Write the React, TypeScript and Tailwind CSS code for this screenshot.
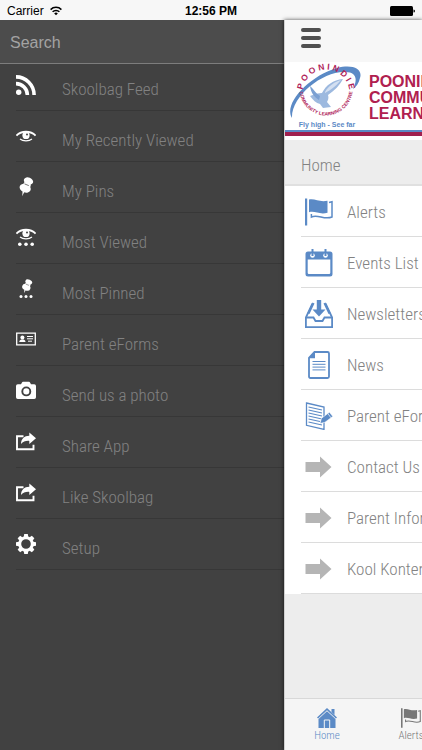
import { useState, type ReactNode } from "react";

interface MenuItem {
  label: string;
  icon: ReactNode;
}

function RssIcon() {
  return (
    <svg viewBox="0 0 20 20" className="h-5 w-5" fill="none" stroke="currentColor" strokeWidth="3.6">
      <circle cx="2.7" cy="17.2" r="2.7" fill="currentColor" stroke="none" />
      <path d="M0 8.6A11.4 11.4 0 0 1 11.4 20" />
      <path d="M0 1.9A18.1 18.1 0 0 1 18.1 20" />
    </svg>
  );
}

function EyeShape() {
  return (
    <>
      <path d="M.4 5.7C5 .4 15 .4 19.6 5.7" fill="none" stroke="currentColor" strokeWidth="1.8" />
      <path d="M4 9C7 11.4 13 11.4 16 9" fill="none" stroke="currentColor" strokeWidth="1.2" />
      <circle cx="10" cy="5.4" r="3.6" fill="currentColor" />
      <circle cx="11" cy="4.6" r="1" fill="#414141" />
    </>
  );
}

function PinShape() {
  return (
    <>
      <ellipse cx="12.5" cy="4" rx="4.8" ry="3.4" transform="rotate(22 12.5 4)" />
      <path d="M8.5 5 15 7.5 14 11 6.5 8.5Z" />
      <ellipse cx="9.2" cy="11.2" rx="5.8" ry="4.2" transform="rotate(22 9.2 11.2)" />
      <path d="M6.6 14 8.6 14.5 6.2 19.2Z" />
      <path d="M8.5 6.9 12.8 8.6" stroke="#414141" strokeWidth=".7" />
    </>
  );
}

function EyeIcon() {
  return (
    <svg viewBox="0 -4 20 20" className="h-5 w-5" fill="currentColor">
      <EyeShape />
    </svg>
  );
}

function MostViewedIcon() {
  return (
    <svg viewBox="0 0 20 20" className="h-5 w-5" fill="currentColor">
      <EyeShape />
      <circle cx="3.8" cy="16.3" r="1.8" />
      <circle cx="10" cy="16.3" r="1.8" />
      <circle cx="16.2" cy="16.3" r="1.8" />
    </svg>
  );
}

function PinIcon() {
  return (
    <svg viewBox="0 0 20 20" className="h-5 w-5" fill="currentColor">
      <PinShape />
    </svg>
  );
}

function MostPinnedIcon() {
  return (
    <svg viewBox="0 0 20 20" className="h-5 w-5" fill="currentColor">
      <g transform="translate(3.5 0) scale(.74)">
        <PinShape />
      </g>
      <circle cx="5" cy="17.5" r="1.5" />
      <circle cx="10" cy="17.5" r="1.5" />
      <circle cx="15" cy="17.5" r="1.5" />
    </svg>
  );
}

function CardIcon() {
  return (
    <svg viewBox="0 0 20 20" className="h-5 w-5" fill="currentColor">
      <path d="M.7 3.2h18.6v11.6H.7z" fill="none" stroke="currentColor" strokeWidth="1.3" />
      <circle cx="6.4" cy="7.5" r="2" />
      <path d="M3.2 12c.3-2 1.6-2.5 3.2-2.5s2.9.5 3.2 2.5z" />
      <path d="M11 6.500h6M11 8.800h6M12 11.200h4" stroke="currentColor" strokeWidth="1" />
    </svg>
  );
}

function CameraIcon() {
  return (
    <svg viewBox="0 0 20 20" className="h-5 w-5" fill="currentColor">
      <path d="M1.8 3.200H5L6 1.400Q6.300.8 7 .8h6q.7 0 1 .6l1 1.800h3.200q1.800 0 1.800 1.800v11.200q0 1.800-1.800 1.800H1.800Q0 18 0 16.200V5q0-1.800 1.800-1.800z" />
      <circle cx="10.3" cy="10.4" r="4" fill="none" stroke="#414141" strokeWidth="1.9" />
    </svg>
  );
}

function ShareIcon() {
  return (
    <svg viewBox="0 0 20 20" className="h-5 w-5" fill="currentColor">
      <path d="M7.500 4.200H1v13h16.500v-4.400" fill="none" stroke="currentColor" strokeWidth="1.900" />
      <path d="M13.300.6 20 6.300l-6.700 5.800V8.900C9.600 8.700 7.200 9.400 5 12c0-5 3.300-8.200 8.300-8.200z" />
    </svg>
  );
}

function GearIcon() {
  const teeth = [0, 45, 90, 135, 180, 225, 270, 315];
  return (
    <svg viewBox="0 0 20 20" className="h-5 w-5" fill="currentColor">
      <circle cx="10" cy="10" r="6.3" fill="none" stroke="currentColor" strokeWidth="3" />
      {teeth.map((a) => (
        <path key={a} d="M7.700 3 8.200 0h3.600l.5 3z" transform={`rotate(${a} 10 10)`} />
      ))}
    </svg>
  );
}

function FlagIcon({ className }: { className: string }) {
  return (
    <svg viewBox="0 0 28 28" className={className} fill="currentColor">
      <path d="M0 .5h2.200V27.500H0z" />
      <path d="M4 1.600C10 .2 14 4.600 22.500 2.800V14.800C14 17 10.500 12.500 4 14.200z" />
      <path
        d="M24 4.500 27 3.700V19C19 22.300 13 15.800 6.400 19V16"
        fill="none"
        stroke="currentColor"
        strokeWidth="1.500"
      />
    </svg>
  );
}

function CalendarIcon() {
  return (
    <svg viewBox="0 0 28 28" className="h-7 w-7" fill="currentColor">
      <path
        fillRule="evenodd"
        d="M3 2.500h22q2.500 0 2.500 2.500v20q0 2.500-2.500 2.500H3Q.5 27.500.5 25V5Q.5 2.500 3 2.500zM2.700 10.500v13.300q0 1.200 1.200 1.200h20.200q1.200 0 1.200-1.200V10.500z"
      />
      <circle cx="7.5" cy="6.5" r="2.3" fill="#fff" />
      <circle cx="20.5" cy="6.5" r="2.3" fill="#fff" />
      <path d="M6.500 0h2v7h-2zM19.500 0h2v7h-2z" />
    </svg>
  );
}

function InboxIcon() {
  return (
    <svg viewBox="0 0 28 28" className="h-7 w-7" fill="none" stroke="currentColor" strokeWidth="1.8">
      <path d="M7.500 3.500.9 17.500V27.100h26.200V17.500L20.500 3.500" />
      <path d="M1 17.500h7.500l2 3.500h7l2-3.500H27" />
      <path d="M8.500 3 3.500 13.500M19.500 3 24.500 13.500" strokeWidth="2.200" />
      <path d="M11.800 0h4.400v9.500h4.300L14 16.500 7.500 9.500h4.300z" fill="currentColor" stroke="none" />
    </svg>
  );
}

function PageIcon() {
  return (
    <svg viewBox="0 0 28 28" className="h-7 w-7" fill="none" stroke="currentColor">
      <path d="M9.500 1H22.500Q24 1 24 2.500v23Q24 27 22.500 27h-17Q4 27 4 25.500V6.800z" strokeWidth="1.8" />
      <path d="M10 1v6.200H3.500z" fill="currentColor" stroke="none" />
      <path d="M7.500 10.500h13M7.500 13.300h13M7.500 16.100h13M7.500 18.900h13" strokeWidth="1" />
    </svg>
  );
}

function FormIcon() {
  return (
    <svg viewBox="0 0 28 28" className="h-7 w-7" fill="none" stroke="currentColor">
      <path d="M1.500 1 19 5v22.400L1.500 23.300z" strokeWidth="1.300" />
      <path
        d="M3.500 5 17 8M3.500 8 17 11M3.500 11 17 14M3.500 14 17 17M3.500 17 15 19.500M3.500 20 17 23"
        strokeWidth="1.200"
      />
      <path d="M15 21.500 16.500 16.200 24.500 10.300 27.800 14.400 20 20.300z" fill="currentColor" stroke="#fff" strokeWidth=".6" />
      <path d="M23 11.800 26 15.800" stroke="#fff" strokeWidth=".7" />
    </svg>
  );
}

function ArrowIcon() {
  return (
    <svg viewBox="0 0 28 28" className="h-7 w-7 text-[#b5b5b5]" fill="currentColor">
      <path d="M.5 9H15V3.500L26.500 14 15 24.500V19H.5z" />
    </svg>
  );
}

function HouseIcon() {
  return (
    <svg viewBox="0 0 20 20" className="h-5 w-5" fill="currentColor">
      <path d="M14.500 1h3v6l-3-3z" />
      <path d="M10 0 0 9.400l1.100 1L10 2.200l8.900 8.200 1.100-1z" />
      <path d="M10 3.200 1.500 11V20H18.500V11z" />
      <path d="M7.300 20v-8h5.400v8" fill="none" stroke="#f5f5f5" strokeWidth="1" />
    </svg>
  );
}

function WifiIcon() {
  return (
    <svg viewBox="0 0 12 10" className="h-[10px] w-3" fill="none" stroke="#000" strokeWidth="1.5">
      <path d="M.6 3.600a7.600 7.600 0 0 1 10.800 0" />
      <path d="M2.600 5.800a4.800 4.800 0 0 1 6.800 0" />
      <path d="M6 9.300 4.200 7.500a2.500 2.500 0 0 1 3.600 0z" fill="#000" stroke="none" />
    </svg>
  );
}

function SchoolLogo() {
  return (
    <svg viewBox="0 0 80 68" className="h-[68px] w-20 shrink-0" role="img" aria-label="Poonindie Community Learning Centre">
      <defs>
        <path id="ring-top" d="M17.500 31A23.500 23.500 0 0 1 64.500 31" />
        <path id="ring-bottom" d="M14.500 27A26.500 26.500 0 0 0 67.500 27" />
      </defs>
      <path
        d="M7 56C-2 42 24 14 52 6 68 2 78 7 75 16 74 21 71 25 68 27 72 19 73 10 60 10 38 9 6 34 7 56z"
        fill="#5b8ac6"
      />
      <path
        d="M25 34C30 32 33 31 37 31 41 23 48 18 58 17 55 23 50 28 43 33 44 36 43 38 42 40L46 45 38 46 35 42C31 41 28 38 25 34z"
        fill="#9db9df"
      />
      <path d="M35 34C30 31 29 27 25 24 26 31 29 35 34 38z" fill="#7ba0d2" />
      <path d="M40 30C44 23 50 20 56 18 51 24 47 27 40 31z" fill="#d3dff1" />
      <g fill="#b0245a" fontFamily="'Liberation Sans', Arial, sans-serif" fontWeight="700">
        <text fontSize="8.5">
          <textPath href="#ring-top" startOffset="50%" textAnchor="middle">
            P O O N I N D I E
          </textPath>
        </text>
        <text fontSize="4.8">
          <textPath href="#ring-bottom" startOffset="50%" textAnchor="middle">
            COMMUNITY LEARNING CENTRE
          </textPath>
        </text>
      </g>
      <text
        x="42"
        y="65"
        fontSize="7"
        textAnchor="middle"
        fontWeight="700"
        fill="#5b8ac6"
        fontFamily="'Liberation Sans', Arial, sans-serif"
      >
        Fly high - See far
      </text>
    </svg>
  );
}

const drawerItems: MenuItem[] = [
  { label: "Skoolbag Feed", icon: <RssIcon /> },
  { label: "My Recently Viewed", icon: <EyeIcon /> },
  { label: "My Pins", icon: <PinIcon /> },
  { label: "Most Viewed", icon: <MostViewedIcon /> },
  { label: "Most Pinned", icon: <MostPinnedIcon /> },
  { label: "Parent eForms", icon: <CardIcon /> },
  { label: "Send us a photo", icon: <CameraIcon /> },
  { label: "Share App", icon: <ShareIcon /> },
  { label: "Like Skoolbag", icon: <ShareIcon /> },
  { label: "Setup", icon: <GearIcon /> },
];

const homeItems: MenuItem[] = [
  { label: "Alerts", icon: <FlagIcon className="h-7 w-7" /> },
  { label: "Events List", icon: <CalendarIcon /> },
  { label: "Newsletters", icon: <InboxIcon /> },
  { label: "News", icon: <PageIcon /> },
  { label: "Parent eForms", icon: <FormIcon /> },
  { label: "Contact Us", icon: <ArrowIcon /> },
  { label: "Parent Information", icon: <ArrowIcon /> },
  { label: "Kool Kontent", icon: <ArrowIcon /> },
];

function StatusBar() {
  return (
    <div className="grid h-5 shrink-0 grid-cols-3 items-center bg-[#f7f7f7] px-[7px] pt-[2px] font-['Liberation_Sans',Arial,sans-serif] text-[12px] leading-4 text-black">
      <div className="flex items-center gap-[6px]">
        <span>Carrier</span>
        <WifiIcon />
      </div>
      <span className="text-center font-bold">12:56 PM</span>
      <svg viewBox="0 0 25 10" className="h-[10px] w-[25px] justify-self-end">
        <rect width="23" height="10" rx="1.5" />
        <path d="M23.500 3.500q1.500 0 1.500 1.500t-1.500 1.500z" />
      </svg>
    </div>
  );
}

function Drawer() {
  const [query, setQuery] = useState("");

  return (
    <aside className="flex w-[284px] shrink-0 flex-col bg-[#414141]">
      <input
        type="search"
        aria-label="Search"
        placeholder="Search"
        value={query}
        onChange={(e) => setQuery(e.target.value)}
        className="h-11 w-full border-b border-[#7d7d7d] bg-[#4c4c4c] px-[10px] pt-[2px] font-['Liberation_Sans',Arial,sans-serif] text-[16px] text-white outline-none placeholder:text-[#a3a3a3]"
      />
      <ul className="pl-4">
        {drawerItems.map((item) => (
          <li key={item.label} className="border-b border-[#373737] first:-mt-1">
            <button type="button" className="flex h-[50px] w-full items-center gap-[26px] text-left">
              <span className="text-white">{item.icon}</span>
              <span className="pt-2 text-[17px] leading-6 font-light text-[#828282]">{item.label}</span>
            </button>
          </li>
        ))}
      </ul>
    </aside>
  );
}

function HomePanel() {
  return (
    <main className="z-10 flex min-w-0 flex-1 flex-col overflow-hidden border-l border-[#d0d0d0] bg-[#ededed] whitespace-nowrap shadow-[0_0_4px_rgba(0,0,0,0.7)]">
      <header className="flex h-[42px] shrink-0 items-center bg-[#f7f7f7] px-4">
        <button type="button" aria-label="Menu" className="flex flex-col gap-[4px] pb-[6px]">
          <span className="h-[4px] w-5 rounded-sm bg-[#505050]" />
          <span className="h-[4px] w-5 rounded-sm bg-[#505050]" />
          <span className="h-[4px] w-5 rounded-sm bg-[#505050]" />
        </button>
      </header>
      <div className="shrink-0 bg-white pb-1">
        <div className="border-b-4 border-[#a0204f]">
          <div className="flex items-center gap-1 border-b-2 border-[#5b8ac6]">
            <SchoolLogo />
            <h1 className="pt-1 font-['Liberation_Sans',Arial,sans-serif] text-[16px] leading-4 font-bold text-[#b0204f]">
              <span className="block">POONINDIE</span>
              <span className="block">COMMUNITY</span>
              <span className="block">LEARNING CENTRE</span>
            </h1>
          </div>
        </div>
      </div>
      <h2 className="h-[46px] shrink-0 border-b-2 border-[#e0e0e0] px-4 pt-[13px] text-[17px] leading-6 font-light text-[#828282]">
        Home
      </h2>
      <ul className="shrink-0 bg-white pl-4">
        {homeItems.map((item) => (
          <li key={item.label} className="border-b border-[#dcdcdc]">
            <a href="#" className="flex h-[50px] items-center gap-[14px] pt-[2px] pl-1">
              <span className="text-[#5b8ac6]">{item.icon}</span>
              <span className="text-[17px] leading-6 font-light text-[#828282]">{item.label}</span>
            </a>
          </li>
        ))}
      </ul>
      <nav className="mt-auto flex h-[52px] shrink-0 border-t border-[#d8d8d8] bg-[#f5f5f5] text-[11px] leading-4 font-light">
        <a href="#" className="flex w-[84px] shrink-0 flex-col items-center pt-[9px] text-[#5b8ac6]">
          <HouseIcon />
          Home
        </a>
        <a href="#" className="flex w-[84px] shrink-0 flex-col items-center pt-[9px] text-[#777777]">
          <FlagIcon className="h-5 w-5" />
          Alerts
        </a>
      </nav>
    </main>
  );
}

export default function App() {
  return (
    <div className="flex h-screen min-h-[700px] flex-col overflow-hidden font-['Roboto_Condensed','Liberation_Sans_Narrow',Roboto,sans-serif]">
      <StatusBar />
      <div className="flex min-h-0 flex-1">
        <Drawer />
        <HomePanel />
      </div>
    </div>
  );
}
